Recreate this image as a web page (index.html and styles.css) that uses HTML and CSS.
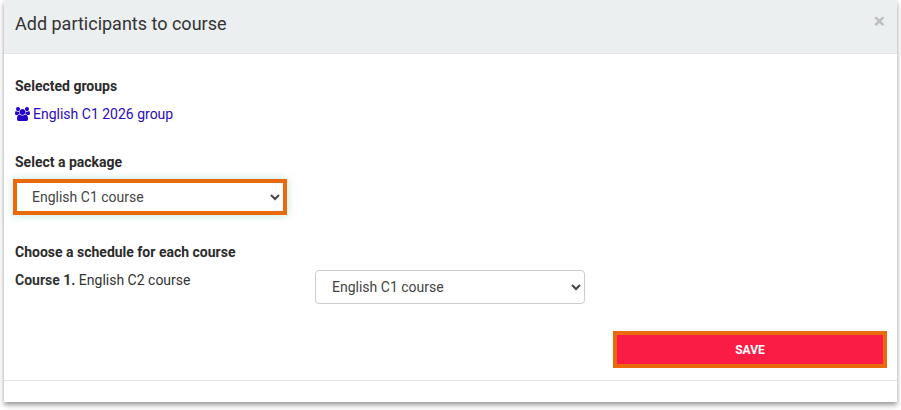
FILE: index.html
```
<!DOCTYPE html>
<html lang="en">
<head>
    <meta charset="UTF-8">
    <meta name="viewport" content="width=device-width, initial-scale=1.0">
    <title>Add participants to course</title>
    <link rel="stylesheet" href="styles.css">
</head>
<body>
    <div class="modal">
        <div class="modal-header">
            <h1>Add participants to course</h1>
            <button type="button" class="close" aria-label="Close">&times;</button>
        </div>
        <form class="modal-body">
            <section>
                <h2>Selected groups</h2>
                <a class="group" href="#">
                    <svg class="icon" viewBox="0 0 1920 1792" aria-hidden="true"><path d="M593 896q-162 5-265 128h-134q-82 0-138-40.5t-56-118.5q0-353 124-353 6 0 43.5 21t97.5 42.5 119 21.5q67 0 133-23-5 37-5 66 0 139 81 256zm1071 637q0 120-73 189.5t-194 69.5h-874q-121 0-194-69.5t-73-189.5q0-53 3.5-103.5t14-109 26.5-108.5 43-97.5 62-81 85.5-53.5 111.5-20q10 0 43 21.5t73 48 107 48 135 21.5 135-21.5 107-48 73-48 43-21.5q61 0 111.5 20t85.5 53.5 62 81 43 97.5 26.5 108.5 14 109 3.5 103.5zm-1024-1277q0 106-75 181t-181 75-181-75-75-181 75-181 181-75 181 75 75 181zm704 384q0 159-112.5 271.5t-271.5 112.5-271.5-112.5-112.5-271.5 112.5-271.5 271.5-112.5 271.5 112.5 112.5 271.5zm576 225q0 78-56 118.5t-138 40.5h-134q-103-123-265-128 81-117 81-256 0-29-5-66 66 23 133 23 59 0 119-21.5t97.5-42.5 43.5-21q124 0 124 353zm-128-609q0 106-75 181t-181 75-181-75-75-181 75-181 181-75 181 75 75 181z"/></svg>
                    English C1 2026 group
                </a>
            </section>

            <section>
                <label class="title" for="package">Select a package</label>
                <select id="package" class="form-control highlight" name="package">
                    <option>English C1 course</option>
                </select>
            </section>

            <section>
                <h2>Choose a schedule for each course</h2>
                <div class="course">
                    <label for="schedule"><b>Course 1.</b> English C2 course</label>
                    <select id="schedule" class="form-control" name="schedule">
                        <option>English C1 course</option>
                    </select>
                </div>
            </section>

            <button type="submit" class="save highlight">SAVE</button>
        </form>
        <div class="modal-footer"></div>
    </div>
</body>
</html>
```
FILE: styles.css
```
* {
    box-sizing: border-box;
}

body {
    margin: 0;
    padding: 0 4px 8px;
    background: #fff;
    color: #333;
    font-family: Roboto, Arial, sans-serif;
    font-size: 14px;
    line-height: 20px;
}

.modal {
    background: #fff;
    box-shadow: 0 3px 5px rgba(0, 0, 0, 0.4);
}

.modal-header {
    display: flex;
    justify-content: space-between;
    align-items: flex-start;
    padding: 12px 12px 17px 11px;
    background: #ebeff0;
    border-bottom: 1px solid #e2e4e5;
}

h1 {
    margin: 0;
    font-size: 18px;
    font-weight: 400;
    line-height: 24px;
}

.close {
    padding: 0;
    border: none;
    background: none;
    color: #bcbfc0;
    font-family: Roboto, Arial, sans-serif;
    font-size: 21px;
    font-weight: 700;
    line-height: 18px;
    cursor: pointer;
}

.modal-body {
    display: flex;
    flex-direction: column;
    gap: 28px;
    padding: 22px 10px 13px 11px;
}

h2,
.title {
    display: block;
    margin: 0 0 8px;
    color: #2b2b2b;
    font-size: 14px;
    font-weight: 700;
    line-height: 20px;
}

.group {
    display: flex;
    align-items: center;
    gap: 3px;
    color: #2a0bbd;
    text-decoration: none;
}

.icon {
    width: 15px;
    height: 14px;
    fill: #2300c8;
}

.form-control {
    display: block;
    width: 270px;
    height: 34px;
    padding: 6px 12px;
    border: 1px solid #ccc;
    border-radius: 4px;
    background: #fff;
    color: #444;
    font-family: Roboto, Arial, sans-serif;
    font-size: 14px;
}

.highlight {
    width: 274px;
    height: 36px;
    margin: -1px -2px;
    border: 4px solid #ea690b;
    border-radius: 0;
}

.form-control.highlight {
    padding: 4px 11px;
    box-shadow: 0 0 8px rgba(120, 205, 185, 0.5);
}

.course {
    display: grid;
    grid-template-columns: 300px 1fr;
}

.save {
    align-self: flex-end;
    height: 37px;
    margin: -1px 0;
    background: #fa1c44;
    color: #fff;
    font-family: Roboto, Arial, sans-serif;
    font-size: 12px;
    font-weight: 700;
    cursor: pointer;
}

.modal-footer {
    height: 22px;
    border-top: 1px solid #e2e2e2;
}
```
